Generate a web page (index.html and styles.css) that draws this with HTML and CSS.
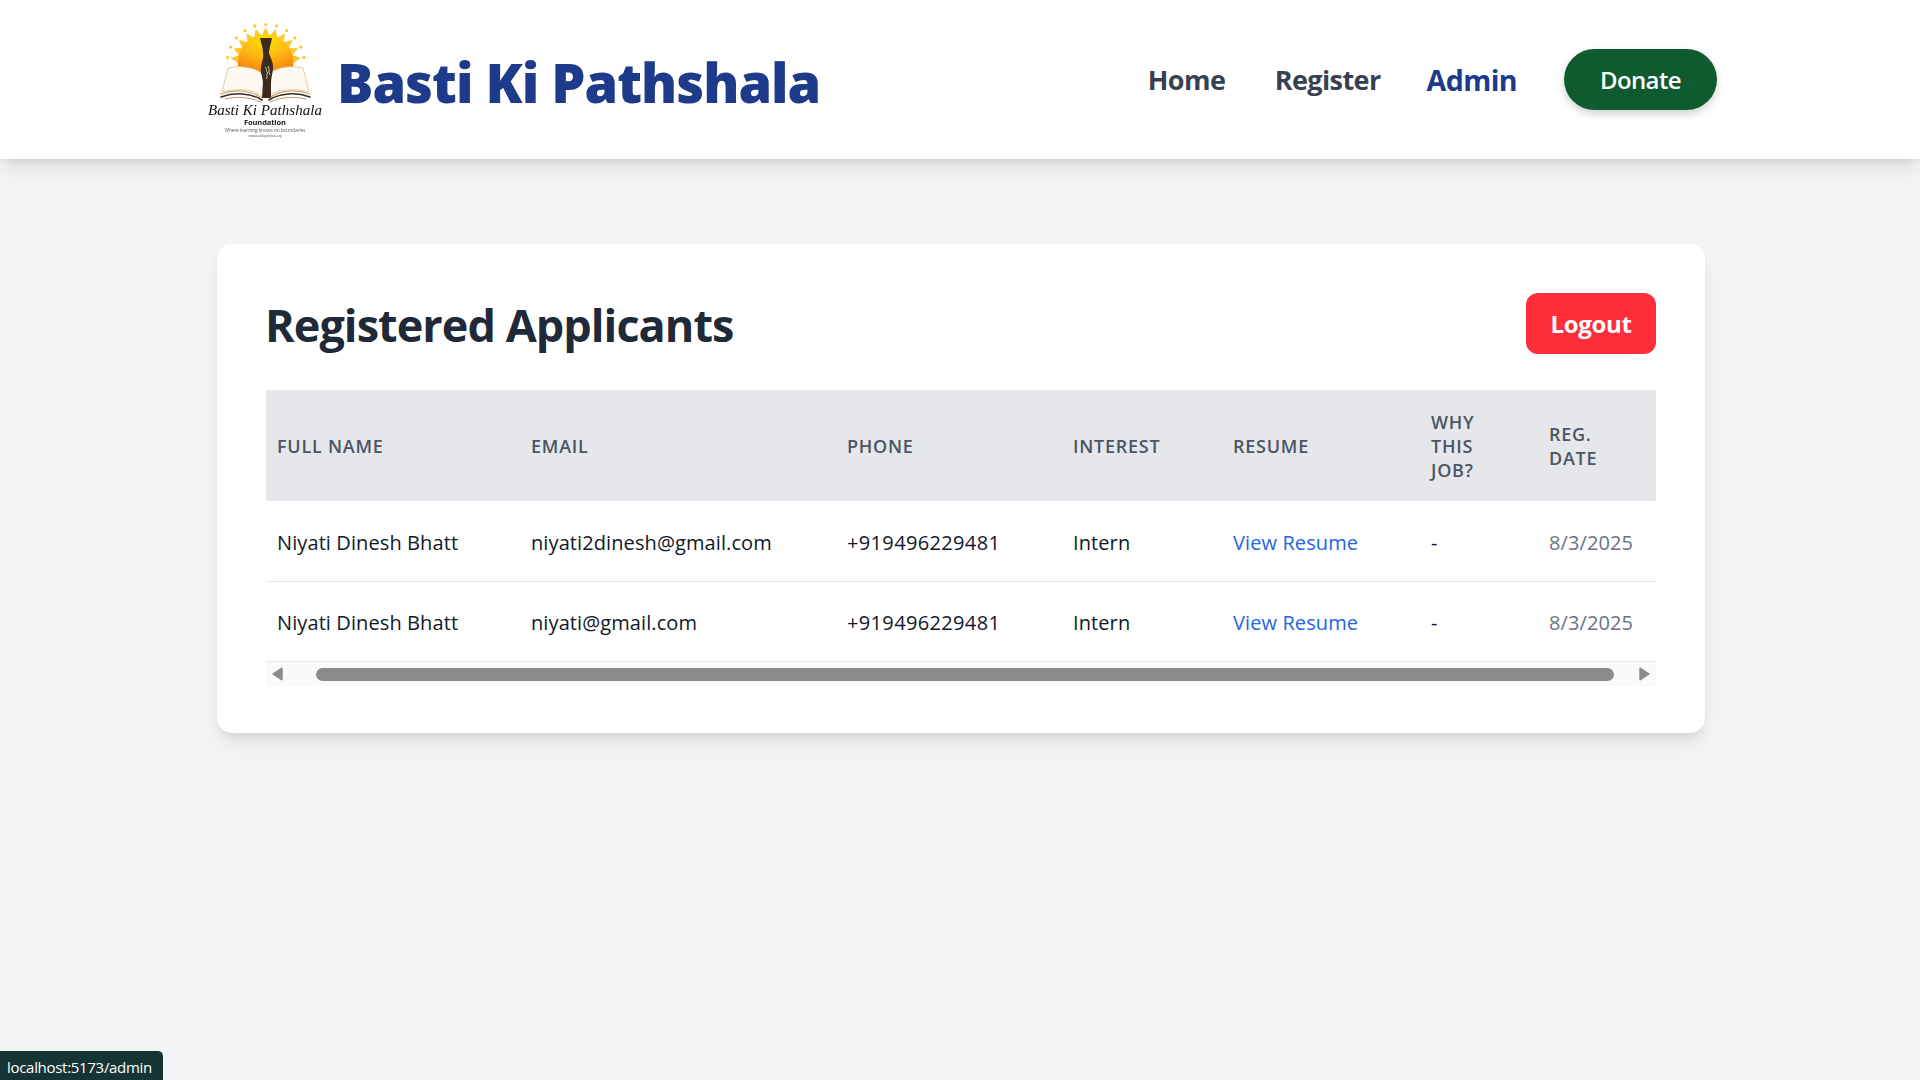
FILE: index.html
```html
<!DOCTYPE html>
<html lang="en">
<head>
<meta charset="utf-8">
<title>Basti Ki Pathshala</title>
<link rel="stylesheet" href="styles.css">
</head>
<body>
<header class="site-header">
  <a class="brand" href="#">
    <svg class="logo" viewBox="0 0 140 135" width="140" height="135" aria-hidden="true">
      <defs>
        <radialGradient id="sun" cx="50%" cy="15%" r="85%">
          <stop offset="0" stop-color="#ffe000"/>
          <stop offset="0.5" stop-color="#fdb913"/>
          <stop offset="1" stop-color="#f5820a"/>
        </radialGradient>
        <g id="ray">
          <path d="M66.5 25 L70.7 16.5 L74.9 25Z"/>
          <circle cx="70.7" cy="13.5" r="1.6"/>
        </g>
      </defs>
      <g fill="#fdc72e">
        <use href="#ray"/>
        <use href="#ray" transform="rotate(-16.4 70.7 52)"/>
        <use href="#ray" transform="rotate(16.4 70.7 52)"/>
        <use href="#ray" transform="rotate(-32.8 70.7 52)"/>
        <use href="#ray" transform="rotate(32.8 70.7 52)"/>
        <use href="#ray" transform="rotate(-49.2 70.7 52)"/>
        <use href="#ray" transform="rotate(49.2 70.7 52)"/>
        <use href="#ray" transform="rotate(-65.6 70.7 52)"/>
        <use href="#ray" transform="rotate(65.6 70.7 52)"/>
        <use href="#ray" transform="rotate(-82 70.7 52)"/>
        <use href="#ray" transform="rotate(82 70.7 52)"/>
      </g>
      <path d="M43 62 V52 A27.7 28.5 0 0 1 98.4 52 V62Z" fill="url(#sun)"/>
      <path d="M33 57C45 54 59 56 68 63V85C57 78 42 77 27 81Z" fill="#fdf9f0" stroke="#d9c197" stroke-width="0.8"/>
      <path d="M108 57C96 54 82 56 73 63V85C84 78 99 77 114 81Z" fill="#fdf9f0" stroke="#d9c197" stroke-width="0.8"/>
      <g fill="none" stroke-linecap="round">
        <path d="M26 83C40 78 56 79 67 87" stroke="#c9a873" stroke-width="1.3"/>
        <path d="M26 86C40 81 56 82 67 89" stroke="#3a2a1c" stroke-width="1.5"/>
        <path d="M30 88C42 85 54 86 66 91" stroke="#b59a6d" stroke-width="1"/>
        <path d="M115 83C101 78 85 79 74 87" stroke="#c9a873" stroke-width="1.3"/>
        <path d="M115 86C101 81 85 82 74 89" stroke="#3a2a1c" stroke-width="1.5"/>
        <path d="M111 88C99 85 87 86 75 91" stroke="#b59a6d" stroke-width="1"/>
      </g>
      <path d="M65 27H77C76 33 74 37 74 42C75 46 78 50 78 56C78 62 76 66 76 72L76 87H67L68 72C68 66 65 62 66 56C67 50 69 46 68 42C68 37 66 32 65 27Z" fill="#3f2a1e"/>
      <path d="M70 56C73 58 70 60 73 62C70 64 74 66 71 68M73 55C75 58 73 61 75 64" fill="none" stroke="#d8d2c8" stroke-width="0.9"/>
      <text class="logo-script" x="70" y="104" text-anchor="middle" textLength="114" lengthAdjust="spacing">Basti Ki Pathshala</text>
      <text class="logo-found" x="70" y="114" text-anchor="middle" textLength="42" lengthAdjust="spacing">Foundation</text>
      <text class="logo-tag" x="70" y="120.5" text-anchor="middle" textLength="81" lengthAdjust="spacing">Where learning knows no boundaries</text>
      <text class="logo-url" x="70" y="126" text-anchor="middle" textLength="33" lengthAdjust="spacing">www.bastikipathshala.org</text>
    </svg>
    <span class="brand-name">Basti Ki Pathshala</span>
  </a>
  <nav class="nav">
    <a class="nav-link home" href="#">Home</a>
    <a class="nav-link" href="#">Register</a>
    <a class="nav-link active" href="#">Admin</a>
    <a class="donate" href="#">Donate</a>
  </nav>
</header>

<main class="main">
  <section class="card">
    <div class="card-head">
      <h1 class="title">Registered Applicants</h1>
      <button class="logout" type="button">Logout</button>
    </div>
    <table class="table">
      <colgroup>
        <col class="c1"><col class="c2"><col class="c3"><col class="c4"><col class="c5"><col class="c6"><col class="c7">
      </colgroup>
      <thead>
        <tr>
          <th>Full Name</th><th>Email</th><th>Phone</th><th>Interest</th><th>Resume</th><th>Why<br>This<br>Job?</th><th>Reg.<br>Date</th>
        </tr>
      </thead>
      <tbody>
        <tr>
          <td>Niyati Dinesh Bhatt</td><td>niyati2dinesh@gmail.com</td><td class="phone">+919496229481</td><td>Intern</td><td><a class="resume" href="#">View Resume</a></td><td>-</td><td class="date">8/3/2025</td>
        </tr>
        <tr>
          <td>Niyati Dinesh Bhatt</td><td>niyati@gmail.com</td><td class="phone">+919496229481</td><td>Intern</td><td><a class="resume" href="#">View Resume</a></td><td>-</td><td class="date">8/3/2025</td>
        </tr>
      </tbody>
    </table>
    <div class="scrollbar">
      <svg class="arrow" viewBox="0 0 11 14" width="11" height="14" aria-hidden="true"><path d="M1 7L10 1.2V12.8Z"/></svg>
      <span class="thumb"></span>
      <svg class="arrow" viewBox="0 0 11 14" width="11" height="14" aria-hidden="true"><path d="M10 7L1 1.2V12.8Z"/></svg>
    </div>
  </section>
</main>
<div class="status">localhost:5173/admin</div>
</body>
</html>
```
FILE: styles.css
```css
* { box-sizing: border-box; }
html, body { margin: 0; height: 100%; }
body {
  background: #f3f4f6;
  font-family: "Open Sans", "Noto Sans", sans-serif;
  color: #1f2937;
  overflow: hidden;
}
a { text-decoration: none; color: inherit; }
.site-header {
  height: 159px;
  background: #fff;
  box-shadow: 0 12px 19px -4px rgba(0,0,0,.1), 0 5px 7px -2px rgba(0,0,0,.06);
  display: flex;
  align-items: center;
  justify-content: space-between;
  padding: 0 203px 0 195px;
  position: relative;
}
.brand { display: flex; align-items: center; gap: 2px; }
.logo { display: block; width: 140px; height: 135px; margin-top: -3px; filter: blur(.35px); }
.logo-script { font: italic 400 15px "Liberation Serif", serif; fill: #111; }
.logo-found { font: 700 7.5px "Open Sans", sans-serif; fill: #222; }
.logo-tag { font: 400 5px "Open Sans", sans-serif; fill: #666; }
.logo-url { font: 400 2.8px "Open Sans", sans-serif; fill: #555; }
.brand-name {
  font-size: 54px;
  font-weight: 800;
  color: #1e3a8a;
  letter-spacing: -.97px;
  margin-top: 5px;
}
.nav { display: flex; align-items: center; }
.nav-link { font-size: 27px; font-weight: 700; color: #374151; margin-right: 46px; letter-spacing: -.6px; }
.nav-link.home { margin-right: 49.5px; }
.nav-link.active { color: #1e3a8a; font-size: 28.6px; margin-right: 47px; }
.donate {
  background: #0f5a2e;
  color: #fff;
  font-size: 24px;
  font-weight: 600;
  letter-spacing: -.6px;
  width: 153px;
  height: 61px;
  border-radius: 31px;
  display: flex;
  align-items: center;
  justify-content: center;
  box-shadow: 0 4px 8px rgba(0,0,0,.18);
}
.main { padding: 85px 215px 0 217px; }
.card {
  background: #fff;
  border-radius: 15px;
  box-shadow: 0 12px 19px -4px rgba(0,0,0,.1), 0 5px 7px -2px rgba(0,0,0,.05);
  padding: 49px;
  height: 489px;
}
.card-head {
  display: flex;
  align-items: center;
  justify-content: space-between;
  height: 61px;
  margin-bottom: 36px;
}
.title { margin: 2px 0 0 -1px; font-size: 45px; font-weight: 700; color: #1f2937; letter-spacing: -.95px; }
.logout {
  background: #fd2d3a;
  border: 0;
  color: #fff;
  font: 700 24px "Open Sans", sans-serif;
  letter-spacing: -.35px;
  width: 130px;
  height: 61px;
  border-radius: 12px;
}
.table { width: 1390px; border-collapse: collapse; table-layout: fixed; }
.c1 { width: 254px; } .c2 { width: 316px; } .c3 { width: 226px; } .c4 { width: 160px; }
.c5 { width: 198px; } .c6 { width: 118px; } .c7 { width: 118px; }
th {
  background: #e5e7eb;
  height: 111px;
  padding: 0 11px;
  text-align: left;
  font-size: 18px;
  line-height: 24px;
  font-weight: 600;
  color: #4b5563;
  text-transform: uppercase;
  letter-spacing: .75px;
}
td {
  height: 80px;
  padding: 3px 11px 0;
  font-size: 20px;
  color: #111827;
  border-bottom: 1px solid #e5e7eb;
  letter-spacing: .1px;
}
td.phone { letter-spacing: .35px; }
.resume { color: #2563eb; }
.date { color: #6b7280; }
.scrollbar {
  height: 24px;
  background: #fafafa;
  display: flex;
  align-items: center;
  justify-content: space-between;
  padding: 1px 6px 0;
}
.thumb { width: 1298px; height: 13px; border-radius: 7px; background: #8b8b8b; margin-left: 8px; }
.arrow { display: block; fill: #8b8b8b; stroke: #8b8b8b; stroke-width: 1.4; stroke-linejoin: round; }
.status {
  position: fixed;
  left: 0;
  bottom: 0;
  height: 29px;
  width: 163px;
  background: #173434;
  color: #fff;
  font-size: 15px;
  line-height: 32px;
  padding-left: 7px;
  border-top-right-radius: 5px;
  letter-spacing: -.3px;
}
```
